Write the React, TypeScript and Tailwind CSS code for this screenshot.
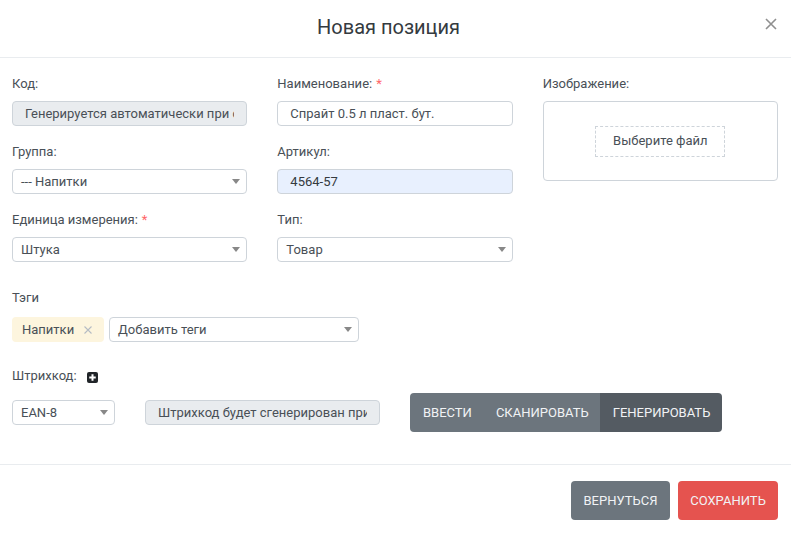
import React from "react";

const Caret = () => (
  <svg width="8" height="5" viewBox="0 0 8 5" className="shrink-0">
    <path d="M0 0H8L4 5Z" fill="#888888" />
  </svg>
);

const Label = ({ children, required }: { children: React.ReactNode; required?: boolean }) => (
  <div className="mb-1.75 h-5 leading-5 text-[#495057]">
    {children}
    {required && <span className="ml-1 text-red-400">*</span>}
  </div>
);

const Select = ({ value, className = "" }: { value: string; className?: string }) => (
  <div className={`flex h-6.25 items-center justify-between rounded border border-[#ced4da] bg-white pl-2 pr-1.5 text-[#495057] ${className}`}>
    <span>{value}</span>
    <Caret />
  </div>
);

const Input = ({
  value,
  tone = "bg-white text-[#495057]",
  className = "",
}: {
  value: string;
  tone?: string;
  className?: string;
}) => (
  <input
    readOnly
    value={value}
    className={`block h-6.25 w-full rounded border border-[#ced4da] px-3 outline-none ${tone} ${className}`}
  />
);

const Field = ({ label, required, children }: { label: string; required?: boolean; children: React.ReactNode }) => (
  <div>
    <Label required={required}>{label}</Label>
    {children}
  </div>
);

export default function App() {
  return (
    <div className="flex h-[534px] w-full flex-col bg-white text-[13px] font-['Roboto',sans-serif]">
      <header className="relative flex h-14.5 shrink-0 items-center justify-center border-b border-[#e9ecef] pb-1 pr-3.5">
        <h1 className="text-xl text-[#343a40]">Новая позиция</h1>
        <svg width="12" height="12" viewBox="0 0 12 12" className="absolute right-3.5 top-4.5">
          <path d="M1 1L11 11M11 1L1 11" stroke="#8f8f8f" strokeWidth="1.6" fill="none" />
        </svg>
      </header>

      <main className="flex-1 pl-3 pr-3.25 pt-4">
        <div className="grid grid-cols-3 gap-x-7.5 gap-y-4">
          <Field label="Код:">
            <Input value="Генерируется автоматически при сохранении" tone="bg-[#e9ecef] text-[#495057]" />
          </Field>
          <Field label="Наименование:" required>
            <Input value="Спрайт 0.5 л пласт. бут." />
          </Field>
          <div className="row-span-3">
            <Label>Изображение:</Label>
            <div className="flex h-20 items-center justify-center rounded border border-[#ced4da]">
              <div className="flex h-7.75 w-32.5 items-center justify-center border border-dashed border-[#ced4da] text-[#495057]">
                Выберите файл
              </div>
            </div>
          </div>
          <Field label="Группа:">
            <Select value="--- Напитки" />
          </Field>
          <Field label="Артикул:">
            <Input value="4564-57" tone="bg-[#e8f0fe] text-[#343a40]" />
          </Field>
          <Field label="Единица измерения:" required>
            <Select value="Штука" />
          </Field>
          <Field label="Тип:">
            <Select value="Товар" />
          </Field>
        </div>

        <div className="mt-6.5 h-5 leading-5 text-[#495057]">Тэги</div>
        <div className="mt-2.25 flex gap-1.25">
          <div className="flex h-6.25 w-23 items-center gap-2.5 rounded bg-[#fdf5de] px-2.5 text-[#495057]">
            Напитки
            <svg width="8" height="8" viewBox="0 0 8 8">
              <path d="M.5.5L7.5 7.5M7.5.5L.5 7.5" stroke="#b5bcc4" strokeWidth="1.1" fill="none" />
            </svg>
          </div>
          <Select value="Добавить теги" className="w-62.5" />
        </div>

        <div className="mt-6 flex h-5 items-center gap-2.5 text-[#495057]">
          Штрихкод:
          <svg width="11" height="11" viewBox="0 0 11 11" className="mt-0.5">
            <rect width="11" height="11" rx="2" fill="#212529" />
            <path d="M5.5 2.25V8.75M2.25 5.5H8.75" stroke="#ffffff" strokeWidth="2" />
          </svg>
        </div>
        <div className="mt-1.75 flex items-center gap-7.5">
          <Select value="EAN-8" className="w-25.75" />
          <Input value="Штрихкод будет сгенерирован при сохранении" tone="bg-[#e9ecef] text-[#495057]" className="w-58.75!" />
          <div className="flex h-9.75 overflow-hidden rounded text-[#f1f3f5]">
            <div className="flex items-center bg-[#6c757d] pl-3.25 pr-3">ВВЕСТИ</div>
            <div className="flex items-center bg-[#6c757d] pl-3 pr-2.75">СКАНИРОВАТЬ</div>
            <div className="flex items-center bg-[#545b62] pl-3.25 pr-3">ГЕНЕРИРОВАТЬ</div>
          </div>
        </div>
      </main>

      <footer className="flex h-17.5 shrink-0 justify-end gap-2 border-t border-[#e9ecef] pr-3.25 pt-4 text-[#f1f3f5]">
        <div className="flex h-9.75 w-24.75 items-center justify-center rounded bg-[#6c757d]">ВЕРНУТЬСЯ</div>
        <div className="flex h-9.75 w-25 items-center justify-center rounded bg-[#e5534f]">СОХРАНИТЬ</div>
      </footer>
    </div>
  );
}
